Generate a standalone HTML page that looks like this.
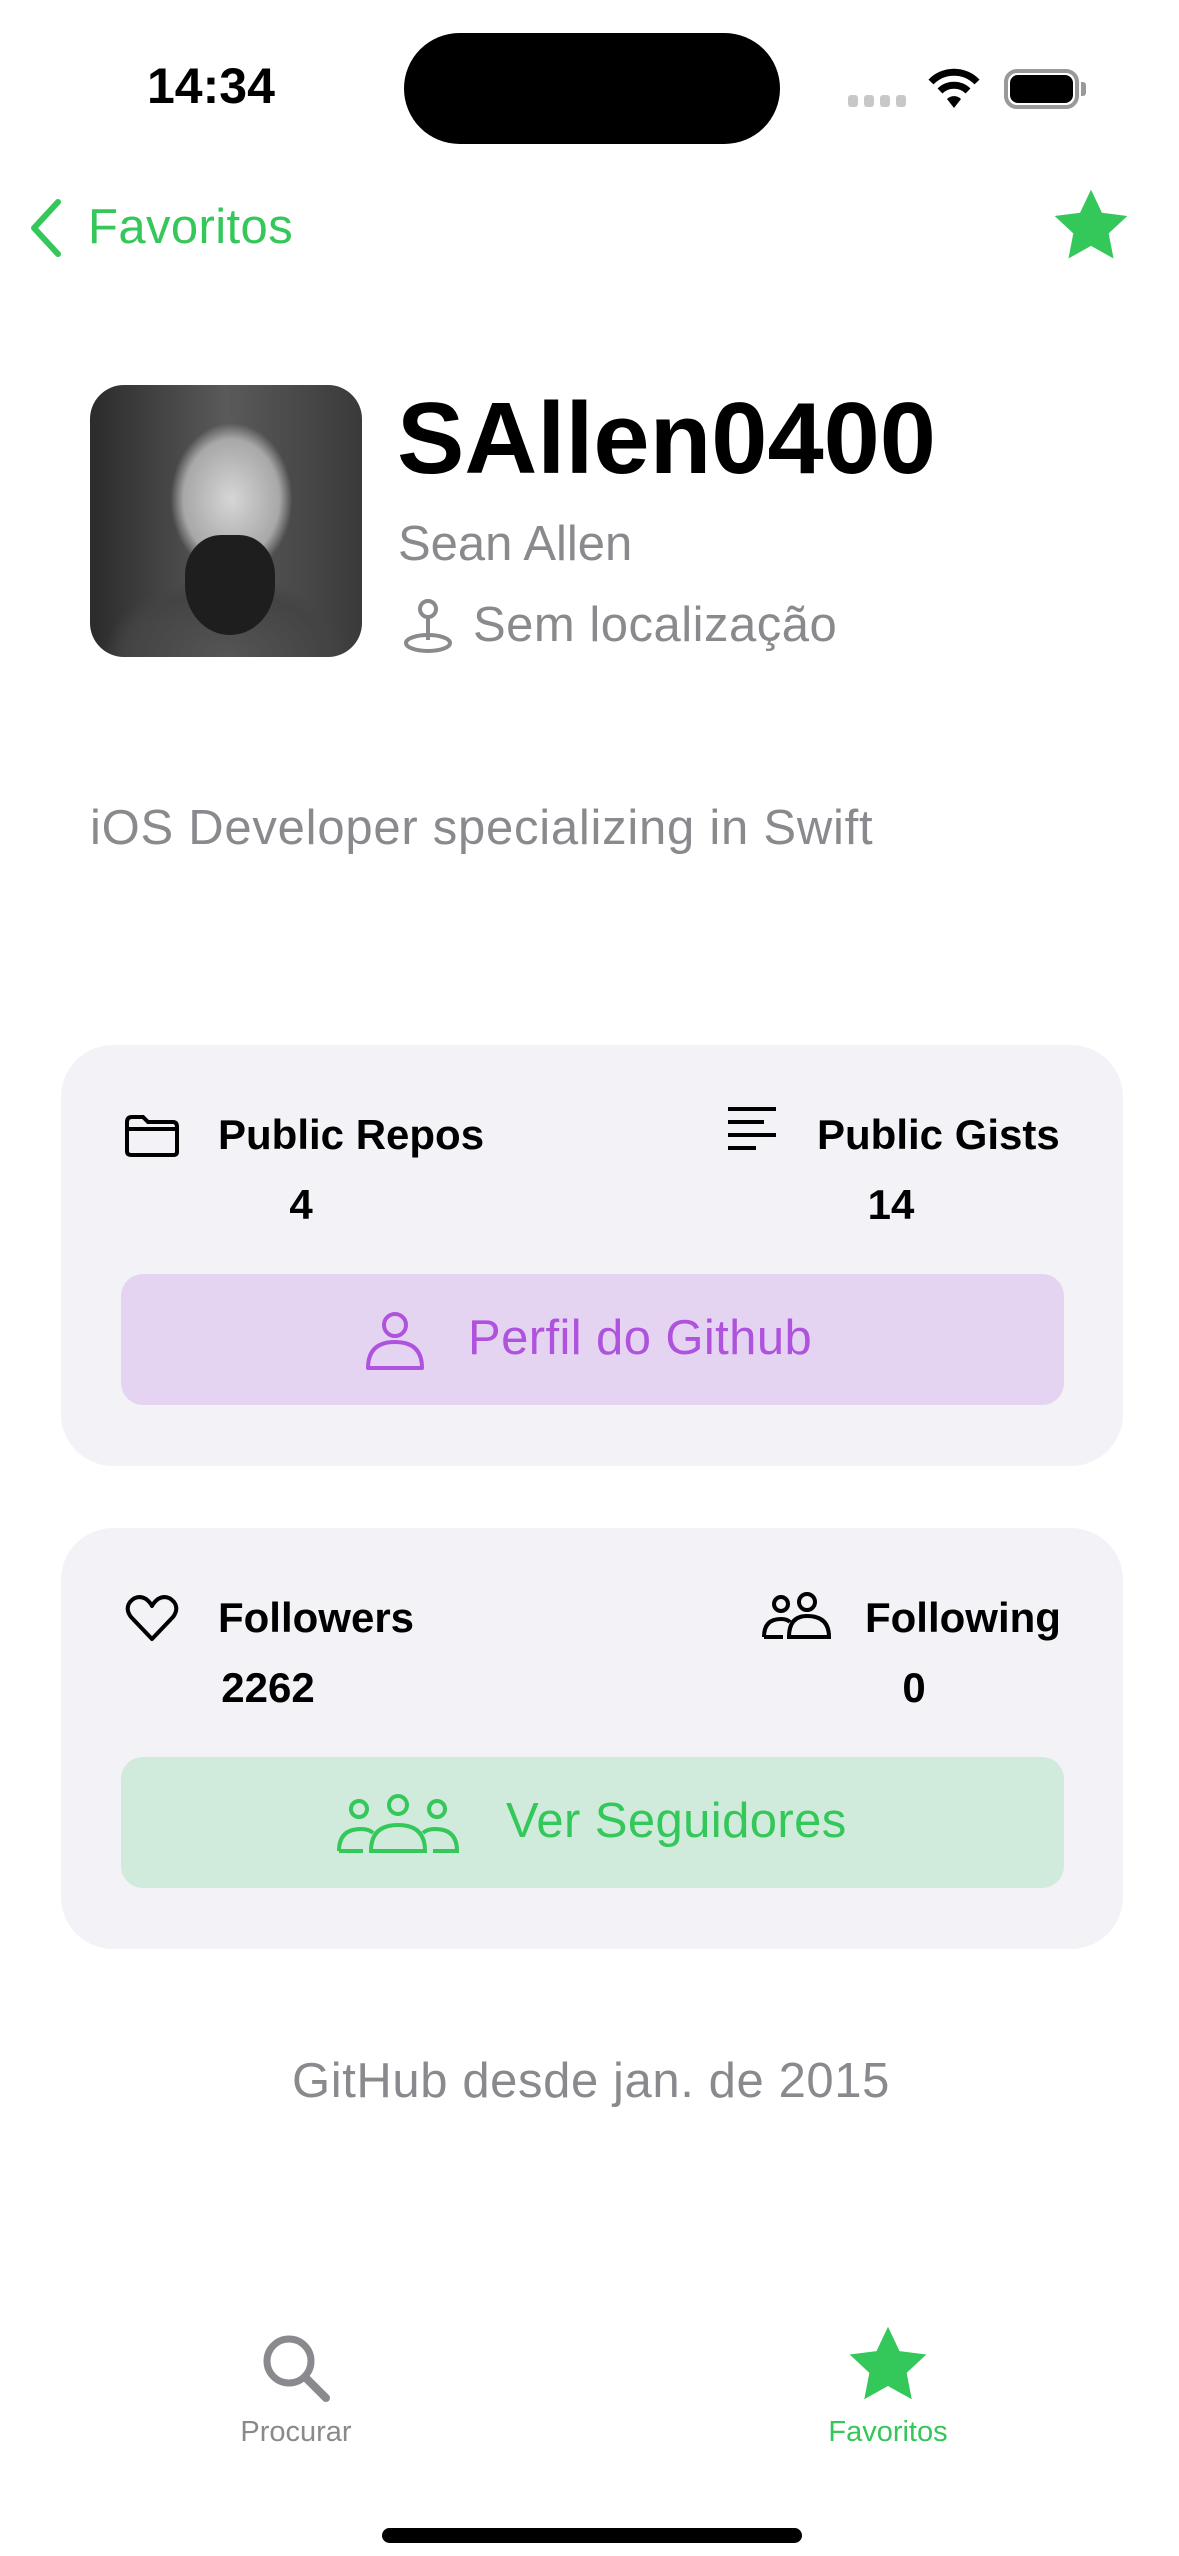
<!DOCTYPE html>
<html><head><meta charset="utf-8"><style>
*{margin:0;padding:0;box-sizing:border-box}
body{width:1179px;height:2556px;background:#fff;position:relative;overflow:hidden;font-family:"Liberation Sans",sans-serif}
.a{position:absolute;white-space:nowrap}
.g{color:#8a8a8e}
.b{font-weight:bold;color:#000}
.card{position:absolute;left:61px;width:1062px;height:421px;background:#f2f2f7;border-radius:52px}
.btn{position:absolute;left:60px;width:943px;height:131px;border-radius:22px}
</style></head><body>
<div class="a b" style="left:147px;top:56px;font-size:50px;line-height:60px">14:34</div>
<div class="a" style="left:404px;top:33px;width:376px;height:111px;background:#000;border-radius:56px"></div>
<div class="a" style="left:848px;top:95px;width:60px;height:12px">
<span style="position:absolute;left:0;width:10px;height:12px;background:#c8c8c8;border-radius:3px"></span>
<span style="position:absolute;left:16px;width:10px;height:12px;background:#c8c8c8;border-radius:3px"></span>
<span style="position:absolute;left:32px;width:10px;height:12px;background:#c8c8c8;border-radius:3px"></span>
<span style="position:absolute;left:48px;width:10px;height:12px;background:#c8c8c8;border-radius:3px"></span></div>
<svg class="a" style="left:928px;top:68px" width="52" height="40" viewBox="0 0 52 40"><path d="M3 14 A32 32 0 0 1 49 14" stroke="#000" stroke-width="7" fill="none"/><path d="M12 23 A20 20 0 0 1 40 23" stroke="#000" stroke-width="7" fill="none"/><path d="M19 31 L26 40 L33 31 A10 10 0 0 0 19 31Z" fill="#000"/></svg>
<div class="a" style="left:1004px;top:69px;width:75px;height:40px;border:4px solid #999;border-radius:13px"></div>
<div class="a" style="left:1010px;top:75px;width:63px;height:28px;background:#000;border-radius:8px"></div>
<div class="a" style="left:1081px;top:82px;width:5px;height:14px;background:#999;border-radius:0 3px 3px 0"></div>

<svg class="a" style="left:26px;top:198px" width="40" height="60" viewBox="0 0 40 60"><path d="M32 4 L8 30 L32 56" stroke="#34c759" stroke-width="6" fill="none" stroke-linecap="round" stroke-linejoin="round"/></svg>
<div class="a" style="left:88px;top:197px;font-size:49px;line-height:60px;color:#34c759;letter-spacing:0.4px">Favoritos</div>
<svg class="a" style="left:1052px;top:188px" width="78" height="74" viewBox="0 0 24 23"><path d="M12 0.5l3.4 7.2 7.9 1-5.8 5.4 1.5 7.8L12 18l-7 3.9 1.5-7.8L0.7 8.7l7.9-1z" fill="#34c759"/></svg>

<div class="a" style="left:90px;top:385px;width:272px;height:272px;border-radius:34px;overflow:hidden;background:radial-gradient(ellipse 32% 40% at 52% 42%,#d6d6d6 0%,#a8a8a8 55%,transparent 70%),radial-gradient(ellipse 45% 30% at 50% 100%,#555 0%,#444 80%,transparent 100%),linear-gradient(90deg,#2b2b2b,#5a5a5a 50%,#3a3a3a)"><div style="position:absolute;left:95px;top:150px;width:90px;height:100px;background:#1e1e1e;border-radius:40% 40% 50% 50%"></div></div>
<div class="a b" style="left:397px;top:382px;font-size:101px;line-height:115px">SAllen0400</div>
<div class="a g" style="left:398px;top:514px;font-size:49px;line-height:60px">Sean Allen</div>
<svg class="a" style="left:401px;top:598px" width="54" height="56" viewBox="0 0 54 56"><circle cx="27" cy="11" r="8" fill="none" stroke="#8a8a8e" stroke-width="4"/><path d="M27 19 V42" stroke="#8a8a8e" stroke-width="4"/><ellipse cx="27" cy="45" rx="22" ry="8" fill="none" stroke="#8a8a8e" stroke-width="4"/></svg>
<div class="a g" style="left:473px;top:595px;font-size:49px;line-height:60px;letter-spacing:0.5px">Sem localização</div>
<div class="a g" style="left:90px;top:798px;font-size:49px;line-height:60px;letter-spacing:0.75px">iOS Developer specializing in Swift</div>

<div class="card" style="top:1045px">
<svg class="a" style="left:62px;top:69px" width="58" height="44" viewBox="0 0 58 44"><path d="M4 8 Q4 3 9 3 H20 L25 8 H50 Q54 8 54 13 V38 Q54 41 50 41 H8 Q4 41 4 37Z M4 15 H54" fill="none" stroke="#000" stroke-width="4"/></svg>
<div class="a b" style="left:157px;top:64px;font-size:42px;line-height:52px">Public Repos</div>
<div class="a b" style="left:240px;top:134px;font-size:42px;line-height:52px;width:0;display:flex;justify-content:center">4</div>
<svg class="a" style="left:663px;top:60px" width="56" height="48" viewBox="0 0 56 48"><path d="M4 4 H52 M4 17 H40 M4 30 H52 M4 43 H32" stroke="#000" stroke-width="4"/></svg>
<div class="a b" style="left:756px;top:64px;font-size:42px;line-height:52px">Public Gists</div>
<div class="a b" style="left:830px;top:134px;font-size:42px;line-height:52px;width:0;display:flex;justify-content:center">14</div>
<div class="btn" style="top:229px;background:#e4d4f1">
<svg class="a" style="left:243px;top:36px" width="62" height="62" viewBox="0 0 62 62"><circle cx="31" cy="15" r="11" fill="none" stroke="#af52de" stroke-width="4"/><path d="M4 58 Q4 32 31 32 Q58 32 58 58Z" fill="none" stroke="#af52de" stroke-width="4" stroke-linejoin="round"/></svg>
<div class="a" style="left:347px;top:34px;font-size:49px;line-height:60px;color:#af52de;letter-spacing:0.4px">Perfil do Github</div>
</div></div>

<div class="card" style="top:1528px">
<svg class="a" style="left:64px;top:67px" width="54" height="48" viewBox="0 0 54 48"><path d="M27 44 L6 22 Q0 14 5 7 Q12 -1 21 4 Q25 7 27 11 Q29 7 33 4 Q42 -1 49 7 Q54 14 48 22Z" fill="none" stroke="#000" stroke-width="4" stroke-linejoin="round"/></svg>
<div class="a b" style="left:157px;top:64px;font-size:42px;line-height:52px">Followers</div>
<div class="a b" style="left:207px;top:134px;font-size:42px;line-height:52px;width:0;display:flex;justify-content:center">2262</div>
<svg class="a" style="left:700px;top:64px" width="72" height="48" viewBox="0 0 72 48"><circle cx="20" cy="12" r="7" fill="none" stroke="#000" stroke-width="4"/><circle cx="46" cy="10" r="8" fill="none" stroke="#000" stroke-width="4"/><path d="M3 45 Q3 27 20 27 Q26 27 29 30 M28 45 Q28 24 46 24 Q68 24 68 45Z M3 45 H22" fill="none" stroke="#000" stroke-width="4"/></svg>
<div class="a b" style="left:804px;top:64px;font-size:42px;line-height:52px">Following</div>
<div class="a b" style="left:853px;top:134px;font-size:42px;line-height:52px;width:0;display:flex;justify-content:center">0</div>
<div class="btn" style="top:229px;background:#d0eadb">
<svg class="a" style="left:214px;top:36px" width="126" height="62" viewBox="0 0 126 62"><circle cx="24" cy="16" r="8" fill="none" stroke="#34c759" stroke-width="4"/><circle cx="63" cy="12" r="9" fill="none" stroke="#34c759" stroke-width="4"/><circle cx="102" cy="16" r="8" fill="none" stroke="#34c759" stroke-width="4"/><path d="M4 58 Q4 36 26 36 Q34 36 38 40 M36 58 Q36 32 63 32 Q90 32 90 58Z M88 40 Q92 36 100 36 Q122 36 122 58 H98 M4 58 H28" fill="none" stroke="#34c759" stroke-width="4"/></svg>
<div class="a" style="left:385px;top:34px;font-size:49px;line-height:60px;color:#34c759;letter-spacing:0.4px">Ver Seguidores</div>
</div></div>

<div class="a g" style="left:0;width:1182px;text-align:center;top:2051px;font-size:49px;line-height:60px;letter-spacing:0.6px">GitHub desde jan. de 2015</div>

<svg class="a" style="left:260px;top:2332px" width="72" height="72" viewBox="0 0 72 72"><circle cx="29" cy="29" r="22" fill="none" stroke="#8a8a8e" stroke-width="7"/><path d="M45 45 L66 66" stroke="#8a8a8e" stroke-width="8" stroke-linecap="round"/></svg>
<div class="a" style="left:196px;width:200px;text-align:center;top:2424px;font-size:29px;line-height:34px;color:#8a8a8e;margin-top:-9px">Procurar</div>
<svg class="a" style="left:846px;top:2325px" width="84" height="78" viewBox="0 0 24 23"><path d="M12 0.5l3.4 7.2 7.9 1-5.8 5.4 1.5 7.8L12 18l-7 3.9 1.5-7.8L0.7 8.7l7.9-1z" fill="#34c759"/></svg>
<div class="a" style="left:788px;width:200px;text-align:center;top:2415px;font-size:29px;line-height:34px;color:#34c759">Favoritos</div>
<div class="a" style="left:382px;top:2528px;width:420px;height:15px;background:#000;border-radius:8px"></div>
</body></html>
